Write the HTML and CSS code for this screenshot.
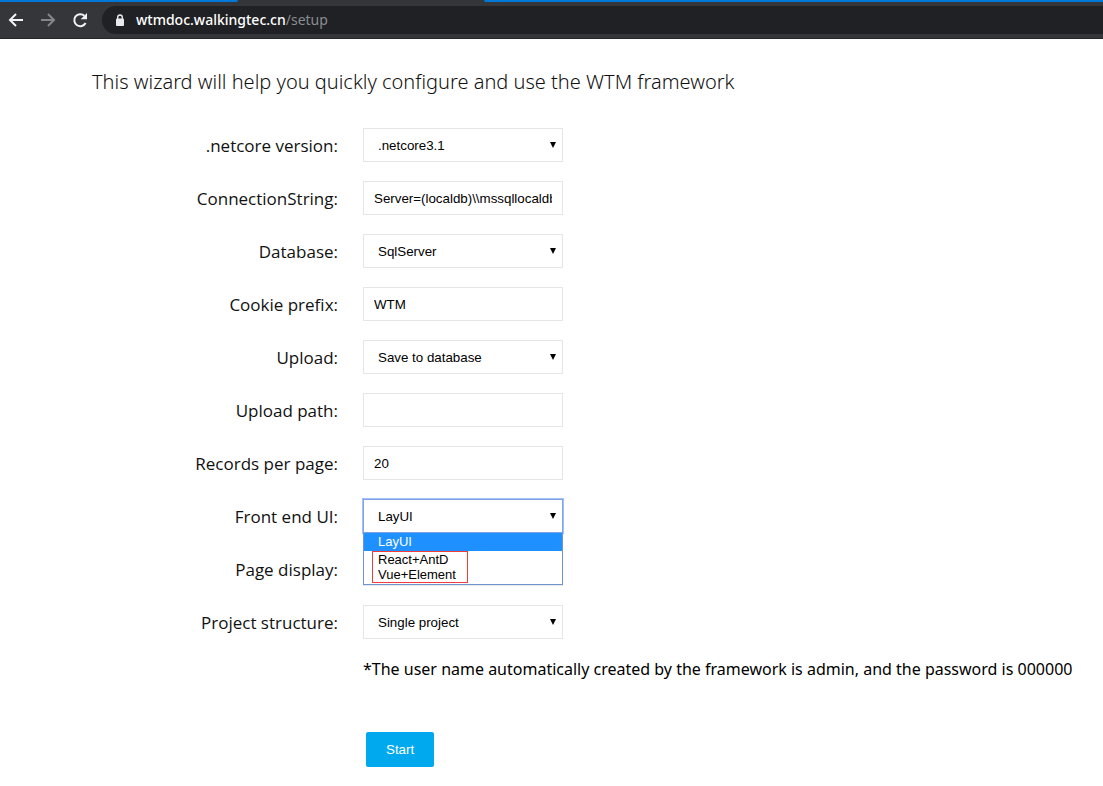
FILE: index.html
```
<!DOCTYPE html>
<html lang="en">
<head>
<meta charset="utf-8">
<meta name="viewport" content="width=device-width, initial-scale=1">
<title>WTM setup</title>
<link rel="stylesheet" href="styles.css">
</head>
<body>
<header class="browser">
  <div class="tabs"><span class="tab tab-left"></span><span class="tab-active"></span><span class="tab tab-right"></span></div>
  <div class="toolbar">
    <button class="nav" type="button" aria-label="Back"><svg viewBox="0 0 16 16"><path d="M15 8H2M8 2L2 8l6 6"/></svg></button>
    <button class="nav nav-off" type="button" aria-label="Forward" disabled><svg viewBox="0 0 16 16"><path d="M1 8h13M8 2l6 6-6 6"/></svg></button>
    <button class="nav" type="button" aria-label="Reload"><svg viewBox="0 0 16 16"><path d="M13.6 11A6 6 0 1 1 12.4 3.8"/><path class="solid" d="M15 1v6.300H8.700z"/></svg></button>
    <div class="address">
      <svg class="lock" viewBox="0 0 10 13"><path class="shackle" d="M2.700 5V3.300a2.300 2.300 0 0 1 4.600 0V5"/><rect x="1" y="4.500" width="8" height="7.500" rx="1"/></svg>
      <span class="url">wtmdoc.walkingtec.cn<span class="path">/setup</span></span>
    </div>
  </div>
</header>
<main class="page">
  <h1 class="title">This wizard will help you quickly configure and use the WTM framework</h1>
  <form class="form">
    <div class="row">
      <label class="label" for="version">.netcore version:</label>
      <div class="control"><select class="field select" id="version"><option>.netcore3.1</option></select><svg class="arrow" viewBox="0 0 6 6"><path d="M0 0h6L3 6z"/></svg></div>
    </div>
    <div class="row">
      <label class="label" for="connection">ConnectionString:</label>
      <div class="control"><input class="field" id="connection" type="text" value="Server=(localdb)\\mssqllocaldb"></div>
    </div>
    <div class="row">
      <label class="label" for="database">Database:</label>
      <div class="control"><select class="field select" id="database"><option>SqlServer</option></select><svg class="arrow" viewBox="0 0 6 6"><path d="M0 0h6L3 6z"/></svg></div>
    </div>
    <div class="row">
      <label class="label" for="cookie">Cookie prefix:</label>
      <div class="control"><input class="field" id="cookie" type="text" value="WTM"></div>
    </div>
    <div class="row">
      <label class="label" for="upload">Upload:</label>
      <div class="control"><select class="field select" id="upload"><option>Save to database</option></select><svg class="arrow" viewBox="0 0 6 6"><path d="M0 0h6L3 6z"/></svg></div>
    </div>
    <div class="row">
      <label class="label" for="upload-path">Upload path:</label>
      <div class="control"><input class="field" id="upload-path" type="text"></div>
    </div>
    <div class="row">
      <label class="label" for="records">Records per page:</label>
      <div class="control"><input class="field" id="records" type="text" value="20"></div>
    </div>
    <div class="row">
      <label class="label" for="ui">Front end UI:</label>
      <div class="control">
        <select class="field select open" id="ui"><option>LayUI</option><option>React+AntD</option><option>Vue+Element</option></select><svg class="arrow" viewBox="0 0 6 6"><path d="M0 0h6L3 6z"/></svg>
        <div class="menu" role="listbox" aria-label="Front end UI">
          <div class="option selected" role="option" aria-selected="true">LayUI</div>
          <div class="marked">
            <div class="option" role="option">React+AntD</div>
            <div class="option" role="option">Vue+Element</div>
          </div>
        </div>
      </div>
    </div>
    <div class="row">
      <label class="label" for="display">Page display:</label>
      <div class="control"><select class="field select" id="display"></select></div>
    </div>
    <div class="row">
      <label class="label" for="structure">Project structure:</label>
      <div class="control"><select class="field select" id="structure"><option>Single project</option></select><svg class="arrow" viewBox="0 0 6 6"><path d="M0 0h6L3 6z"/></svg></div>
    </div>
    <p class="note">*The user name automatically created by the framework is admin, and the password is 000000</p>
    <button class="start" type="button">Start</button>
  </form>
</main>
</body>
</html>
```
FILE: styles.css
```
* { box-sizing: border-box; }
body {
  margin: 0;
  background: #fff;
  color: #111;
  font-family: "Noto Sans", "Open Sans", sans-serif;
  font-size: 16px;
}
.browser {
  background: #35363a;
  border-bottom: 1px solid #26272a;
}
.tabs { display: flex; height: 2px; }
.tab { background: #0078d7; }
.tab-left { width: 238px; border-bottom-right-radius: 2px; }
.tab-active { width: 246px; }
.tab-right { flex: 1; border-bottom-left-radius: 2px; }
.toolbar {
  display: flex;
  align-items: center;
  gap: 16px;
  height: 36px;
  padding-left: 8px;
}
.nav {
  width: 16px;
  height: 16px;
  padding: 0;
  border: 0;
  background: none;
  color: #f1f3f4;
}
.nav-off { color: #85868a; }
.nav svg {
  display: block;
  width: 16px;
  height: 16px;
  fill: none;
  stroke: currentColor;
  stroke-width: 2;
}
.nav .solid { fill: currentColor; stroke: none; }
.address {
  display: flex;
  flex: 1;
  align-items: center;
  gap: 11px;
  height: 28px;
  margin-left: -2px;
  padding-left: 13px;
  border-radius: 14px 0 0 14px;
  background: #202124;
}
.lock { width: 10px; height: 13px; fill: #e8eaed; }
.lock .shackle { fill: none; stroke: #e8eaed; stroke-width: 1.400; }
.url { color: #fff; font-size: 14px; font-weight: 500; line-height: 20px; }
.path { color: #8b8d91; font-weight: 400; }
.page { padding: 27px 0 19px 92px; }
.title {
  margin: 0 0 31px;
  font-size: 20px;
  font-weight: 300;
  line-height: 31px;
}
.row {
  display: grid;
  grid-template-columns: 246px 200px;
  column-gap: 25px;
  margin-bottom: 19px;
}
.label {
  padding-top: 6px;
  font-family: "Open Sans", "Noto Sans", sans-serif;
  font-size: 17px;
  line-height: 24px;
  text-align: right;
  white-space: nowrap;
}
.control { position: relative; display: grid; align-items: center; }
.field {
  grid-area: 1 / 1;
  width: 100%;
  height: 34px;
  padding: 0 10px;
  border: 1px solid #e6e6e6;
  border-radius: 0;
  background: #fff;
  color: #000;
  font-family: "Liberation Sans", Arial, sans-serif;
  outline: 0;
}
.select { padding-left: 14px; appearance: none; }
.arrow {
  grid-area: 1 / 1;
  justify-self: end;
  width: 6px;
  height: 6px;
  margin-right: 7px;
  pointer-events: none;
}
.open { border-color: #7ea3e6; box-shadow: 0 0 0 1px #a3c1f7; }
.menu {
  position: absolute;
  z-index: 1;
  top: 100%;
  left: 0;
  width: 100%;
  padding-bottom: 1px;
  border: 1px solid #6f94d2;
  border-top: 0;
  background: #fff;
  color: #000;
  font: 13px/16px "Liberation Sans", Arial, sans-serif;
}
.selected {
  height: 18px;
  padding-left: 14px;
  background: #1e90ff;
  color: #fff;
  line-height: 18px;
}
.marked {
  width: 96px;
  height: 32px;
  margin-left: 8px;
  padding-left: 5px;
  border: 1px solid #f03c3c;
}
.marked .option { line-height: 15px; }
.note {
  margin: 0 0 51px 271px;
  color: #000;
  line-height: 23px;
}
.start {
  display: block;
  height: 35px;
  margin-left: 274px;
  padding: 0 20px;
  border: 0;
  border-radius: 2px;
  background: #00a9ee;
  color: #fff;
  font-family: "Liberation Sans", Arial, sans-serif;
}
```
